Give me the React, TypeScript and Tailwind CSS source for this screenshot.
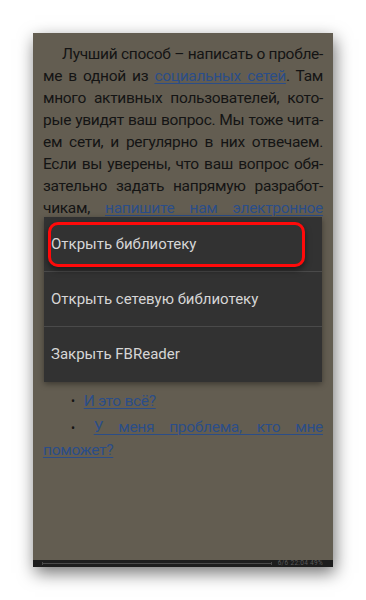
import React from "react";

const lines = [
  "ме в одной из |социальных сетей|. Там",
  "много активных пользователей, кото-",
  "рые увидят ваш вопрос. Мы тоже чита-",
  "ем сети, и регулярно в них отвечаем.",
  "Если вы уверены, что ваш вопрос обя-",
  "зательно задать напрямую разработ-",
  "чикам, |напишите нам электронное|",
];

const Link = ({ children }: { children: React.ReactNode }) => (
  <span className="text-[#2b4d88] underline decoration-1 underline-offset-2">{children}</span>
);

const Line = ({ text }: { text: string }) => {
  const parts = text.split("|");
  return (
    <div className="text-justify [text-align-last:justify]">
      {parts.map((p, i) => (i % 2 === 1 ? <Link key={i}>{p}</Link> : <span key={i}>{p}</span>))}
    </div>
  );
};

const MenuItem = ({ label, last }: { label: string; last?: boolean }) => (
  <div className={`h-[55px] flex items-center pl-[7px] text-[15px] text-[#d6d6d6] ${last ? "" : "border-b border-[#4a4a4a]"}`}>
    {label}
  </div>
);

export default function App() {
  return (
    <div className="w-[366px] h-[600px] bg-white pt-[33px] pl-[33px] font-['Roboto',sans-serif]">
      <div className="relative w-[300px] h-[534px] bg-[#635d51] flex flex-col shadow-[2px_6px_16px_rgba(0,0,0,0.55)]">
        <div className="flex-1 px-[10px] pt-[10px] text-[15.5px] tracking-[-0.3px] leading-[22px] text-[#141414]">
          <div className="pl-[19px] text-justify [text-align-last:justify]">
            Лучший способ – написать о пробле-
          </div>
          {lines.map((l, i) => (
            <Line key={i} text={l} />
          ))}
          <div className="h-[170px]" />
          <div className="flex items-center gap-[9px] pl-[28px] leading-[24px]">
            <span className="text-[12px]">•</span>
            <Link>И это всё?</Link>
          </div>
          <div className="mt-[3px] pl-[28px] text-justify [text-align-last:justify]">
            <span className="text-[12px] mr-[19px]">•</span>
            <Link>У меня проблема, кто мне</Link>
          </div>
          <div>
            <Link>поможет?</Link>
          </div>
        </div>

        <div className="h-[7px] bg-[#1d1d1d] flex items-center pl-[9px] pr-[10px] gap-[6px]">
          <div className="flex-1 h-px bg-[#4a4a4a] relative">
            <div className="absolute left-0 -top-[1px] w-px h-[3px] bg-[#4a4a4a]" />
            <div className="absolute right-0 -top-[1px] w-px h-[3px] bg-[#4a4a4a]" />
          </div>
          <span className="text-[6.5px] leading-none text-[#5a5a5a] tracking-[0.3px]">6/6 22:04 49%</span>
        </div>

        <div className="absolute left-[11px] top-[184px] w-[278px] bg-[#323232] shadow-[0_2px_6px_rgba(0,0,0,0.4)]">
          <MenuItem label="Открыть библиотеку" />
          <MenuItem label="Открыть сетевую библиотеку" />
          <MenuItem label="Закрыть FBReader" last />
          <div className="absolute left-[4px] top-[5px] w-[257px] h-[45px] rounded-[10px] border-[3px] border-[#ff0a0a] shadow-[0_3px_6px_rgba(0,0,0,0.5)]" />
        </div>
      </div>
    </div>
  );
}
